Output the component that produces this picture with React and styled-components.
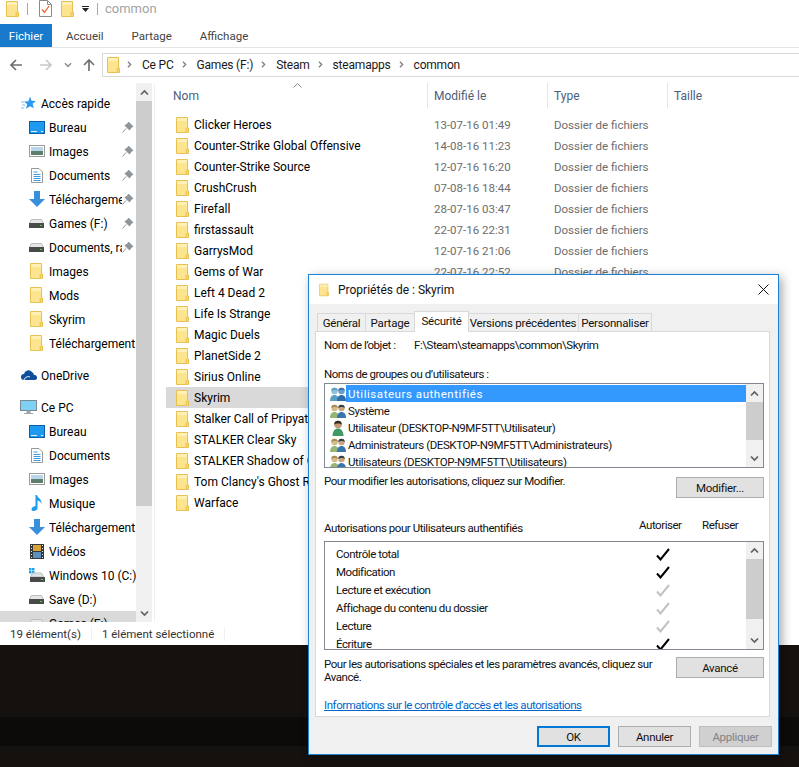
import React from 'react';
import styled, { createGlobalStyle } from 'styled-components';

const GlobalStyle = createGlobalStyle`
  html, body { margin: 0; padding: 0; background: #15110e; }
  * { box-sizing: border-box; }
  svg { display: block; flex: none; }
`;

const UI_FONT = 'Roboto, "Noto Sans", sans-serif';

const Page = styled.div`
  position: relative;
  display: flex;
  flex-direction: column;
  width: 799px;
  height: 767px;
  overflow: hidden;
  font-family: ${UI_FONT};
  background: #15110e;
`;
const Explorer = styled.div`
  display: flex;
  flex-direction: column;
  height: 645px;
  background: #fff;
`;
const QuickBar = styled.div`
  display: flex;
  align-items: center;
  height: 24px;
  padding: 0 0 7px 6px;
`;
const BarLine = styled.span`
  width: 1px;
  height: 12px;
  background: #a8a8a8;
  margin: ${p => p.$margin};
`;
const BarGap = styled.span`
  width: ${p => p.$w}px;
  flex: none;
`;
const BarTitle = styled.span`
  font-size: 13px;
  color: #a3a3a3;
  margin-left: 7px;
`;
const Ribbon = styled.div`
  display: flex;
  height: 24px;
  border-bottom: 1px solid #e6e6e6;
`;
const FileTab = styled.div`
  width: 52px;
  height: 23px;
  background: #1979ca;
  color: #fff;
  font-size: 11.5px;
  line-height: 25px;
  text-align: center;
`;
const RibbonTab = styled.div`
  font-size: 11.5px;
  line-height: 25px;
  color: #444;
  margin-left: ${p => p.$gap}px;
`;
const AddressRow = styled.div`
  display: flex;
  align-items: flex-start;
  height: 35px;
  padding: 5px 0 0 9px;
`;
const NavButton = styled.div`
  width: ${p => p.$w}px;
  height: 24px;
  display: flex;
  align-items: center;
  justify-content: flex-start;
`;
const AddressBox = styled.div`
  display: flex;
  align-items: center;
  flex: 1;
  height: 24px;
  margin-left: 5px;
  padding: 0 0 1px 4px;
  border: 1px solid #d9d9d9;
  border-right: none;
`;
const Crumb = styled.span`
  font-size: 12px;
  letter-spacing: -0.2px;
  color: #1a1a1a;
  margin: 0 7px 0 9px;
  white-space: nowrap;
`;
const Body = styled.div`
  display: flex;
  flex: 1;
  min-height: 0;
`;
const Sidebar = styled.div`
  display: flex;
  width: 155px;
  border-right: 1px solid #f0f0f0;
`;
const NavList = styled.div`
  width: 136px;
  padding-top: 8px;
  overflow: hidden;
`;
const NavRow = styled.div`
  display: flex;
  align-items: center;
  height: 24px;
  padding-left: ${p => (p.$top ? 20 : 28)}px;
  margin-top: ${p => p.$space || 0}px;
  background: ${p => (p.$active ? '#d9d9d9' : 'transparent')};
`;
const NavIcon = styled.span`
  display: flex;
  justify-content: center;
  width: 17px;
  margin-right: 4px;
`;
const NavText = styled.span`
  flex: 1;
  min-width: 0;
  padding-top: 1px;
  overflow: hidden;
  white-space: nowrap;
  font-size: 12px;
  color: #000;
`;
const PinSlot = styled.span`
  width: 14px;
  flex: none;
`;
const ScrollTrack = styled.div`
  display: flex;
  flex-direction: column;
  align-items: center;
  width: ${p => p.$w}px;
  flex: none;
  background: #f0f0f0;
`;
const ScrollArrow = styled.div`
  display: flex;
  align-items: center;
  justify-content: center;
  width: 100%;
  height: ${p => p.$h}px;
  flex: none;
`;
const ScrollThumb = styled.div`
  width: 100%;
  flex: none;
  height: ${p => p.$h}px;
  background: #cdcdcd;
`;
const ScrollGap = styled.div`
  flex: 1;
`;
const Main = styled.div`
  flex: 1;
  min-width: 0;
  overflow: hidden;
`;
const HeaderRow = styled.div`
  position: relative;
  display: flex;
  height: 25px;
  padding-left: 18px;
  margin-bottom: 6px;
`;
const SortCaret = styled.div`
  position: absolute;
  left: 138px;
  top: 0;
`;
const HeaderCell = styled.div`
  width: ${p => p.$w}px;
  flex: none;
  font-size: 12px;
  line-height: 26px;
  color: #4c607a;
  padding-left: ${p => p.$pad || 0}px;
  border-right: 1px solid ${p => (p.$last ? 'transparent' : '#e5e5e5')};
`;
const FileRow = styled.div`
  display: flex;
  align-items: center;
  height: 21px;
  margin-left: 11px;
  width: 390px;
  background: ${p => (p.$active ? '#d9d9d9' : 'transparent')};
`;
const FileIcon = styled.span`
  width: 28px;
  padding-left: 10px;
  flex: none;
`;
const FileName = styled.span`
  width: 240px;
  flex: none;
  white-space: nowrap;
  overflow: hidden;
  font-size: 12px;
  color: #000;
`;
const FileMeta = styled.span`
  width: 120px;
  flex: none;
  font-size: 11.5px;
  color: #6d6d6d;
  white-space: nowrap;
`;
const StatusBar = styled.div`
  display: flex;
  align-items: center;
  height: 23px;
  padding-left: 10px;
  font-size: 11.5px;
  color: #333;
`;
const StatusLine = styled.span`
  width: 1px;
  height: 14px;
  background: #f0f0f0;
  margin: ${p => p.$margin};
`;
const Desktop = styled.div`
  flex: 1;
  padding-top: 72px;
`;
const DesktopBand = styled.div`
  height: 29px;
  background: #0c0b09;
`;

const Dialog = styled.div`
  position: absolute;
  left: 308px;
  top: 274px;
  display: flex;
  flex-direction: column;
  width: 471px;
  height: 481px;
  background: #f0f0f0;
  border: 1px solid #1883d7;
  box-shadow: 3px 3px 10px rgba(0, 0, 0, 0.35);
  color: #111;
`;
const DialogTitle = styled.div`
  display: flex;
  align-items: center;
  height: 29px;
  padding: 0 9px 0 10px;
  background: #fff;
  font-size: 12px;
  color: #111;
`;
const TitleText = styled.span`
  flex: 1;
  margin-left: 9px;
`;
const TabStrip = styled.div`
  display: flex;
  align-items: flex-end;
  height: 28px;
  padding-left: 8px;
  margin-bottom: -1px;
  position: relative;
  z-index: 1;
`;
const Tab = styled.div`
  width: ${p => p.$w}px;
  height: ${p => (p.$active ? 21 : 19)}px;
  margin: 0 ${p => (p.$active ? -1 : 0)}px;
  position: relative;
  z-index: ${p => (p.$active ? 2 : 1)};
  background: ${p => (p.$active ? '#fff' : '#f0f0f0')};
  border: 1px solid #d9d9d9;
  border-bottom: ${p => (p.$active ? 'none' : '1px solid #d9d9d9')};
  border-left-width: ${p => (p.$first || p.$active ? 1 : 0)}px;
  font-size: 11.5px;
  letter-spacing: -0.2px;
  line-height: ${p => (p.$active ? 19 : 18)}px;
  text-align: center;
  white-space: nowrap;
`;
const Panel = styled.div`
  display: flex;
  flex-direction: column;
  height: 386px;
  margin: 0 8px 0 6px;
  padding: 4px 5px 0 8px;
  background: #fff;
  border: 1px solid #d9d9d9;
  font-size: 11.5px;
  letter-spacing: -0.45px;
`;
const ObjectRow = styled.div`
  display: flex;
  height: 18px;
  line-height: 18px;
  margin-bottom: 11px;
`;
const ObjectLabel = styled.span`
  width: 90px;
  flex: none;
`;
const Label = styled.div`
  height: 18px;
  line-height: 18px;
  margin-top: ${p => p.$top || 0}px;
`;
const ListBox = styled.div`
  display: flex;
  flex: none;
  height: ${p => p.$h}px;
  border: 1px solid #828790;
  overflow: hidden;
`;
const ListRows = styled.div`
  flex: 1;
  min-width: 0;
  padding-top: ${p => p.$pad}px;
  overflow: hidden;
`;
const UserRow = styled.div`
  display: flex;
  align-items: center;
  height: 17px;
  padding-left: 5px;
`;
const UserName = styled.span`
  flex: 1;
  height: 17px;
  line-height: 18px;
  padding-left: 2px;
  white-space: nowrap;
  letter-spacing: ${p => (p.$active ? '0.55px' : '-0.4px')};
  color: ${p => (p.$active ? '#fff' : '#111')};
  background: ${p => (p.$active ? '#3399ff' : 'transparent')};
`;
const ActionRow = styled.div`
  display: flex;
  justify-content: space-between;
  align-items: flex-start;
  margin-top: ${p => p.$top}px;
`;
const Hint = styled.div`
  width: 345px;
  line-height: 13px;
  margin-top: 1px;
`;
const Button = styled.div`
  display: flex;
  align-items: center;
  justify-content: center;
  flex: none;
  width: ${p => p.$w || 88}px;
  height: 21px;
  background: ${p => (p.$disabled ? '#d0d0d0' : '#e1e1e1')};
  border: ${p => (p.$primary ? '2px solid #0078d7' : `1px solid ${p.$disabled ? '#bfbfbf' : '#adadad'}`)};
  color: ${p => (p.$disabled ? '#838383' : '#111')};
  font-size: 11.5px;
  letter-spacing: -0.3px;
`;
const PermHeader = styled.div`
  display: grid;
  grid-template-columns: 315px 63px 60px;
  height: 20px;
  margin-top: 18px;
  margin-bottom: 5px;
`;
const PermTitle = styled.span`
  line-height: 24px;
`;
const PermColumn = styled.span`
  line-height: 18px;
`;
const PermRow = styled.div`
  display: grid;
  grid-template-columns: 320px 18px;
  align-items: center;
  height: 18px;
  padding-left: 11px;
`;
const LinkText = styled.a`
  display: block;
  margin-top: 14px;
  color: #0066cc;
  text-decoration: underline;
`;
const DialogFooter = styled.div`
  display: flex;
  justify-content: flex-end;
  gap: 8px;
  padding: 9px 6px 0 0;
`;

const Folder = ({ w = 13, h = 16 }) => (
  <svg width={w} height={h} viewBox="0 0 13 16">
    <path d="M.5.5h11v10.500h1v4.500H.5z" fill="#fde48f" stroke="#e8c050" />
    <path d="M1 1h10v3H1z" fill="#fff0b8" />
    <path d="M9.500 11h2v4.500h-2z" fill="#f1ca5a" />
  </svg>
);
const Chevron = ({ dir = 'down', color = '#606060', size = 9 }) => {
  const rot = { down: 0, up: 180, right: -90 }[dir];
  return (
    <svg width={size} height={size} viewBox="0 0 9 9" style={{ transform: `rotate(${rot}deg)` }}>
      <path d="M1 2.500l3.500 3.500L8 2.500" fill="none" stroke={color} strokeWidth="1.700" />
    </svg>
  );
};
const Arrow = ({ dir, color }) => {
  const rot = { left: 0, right: 180, up: 90 }[dir];
  return (
    <svg width="14" height="14" viewBox="0 0 14 14" style={{ transform: `rotate(${rot}deg)` }}>
      <path d="M13 7H2M7 2L2 7l5 5" fill="none" stroke={color} strokeWidth="1.700" />
    </svg>
  );
};
const CheckList = () => (
  <svg width="13" height="17" viewBox="0 0 13 17">
    <path d="M.5.5h8l4 4v12H.5z" fill="#fff" stroke="#8a8a8a" />
    <path d="M8.500.5v4h4" fill="none" stroke="#8a8a8a" />
    <path d="M3 9.500l2.500 3L10 6" fill="none" stroke="#e8622a" strokeWidth="1.300" />
  </svg>
);
const Star = () => (
  <svg width="15" height="15" viewBox="0 0 15 15">
    <path d="M9 .5l1.600 4.300 4.400.2-3.400 2.800 1.200 4.400L9 10.200l-4 2.500 1.200-4.400L3 5.600l4.400-.3z" fill="#2a9af0" />
    <path d="M0 6h3M1 9h3M0 12h3" stroke="#7cc3f5" strokeWidth="1" />
  </svg>
);
const DesktopIcon = () => (
  <svg width="16" height="13" viewBox="0 0 16 13">
    <rect x=".5" y=".5" width="15" height="12" fill="#1e9bf0" stroke="#0d5fa8" />
    <path d="M2 10.500h6M12 10.500h2" stroke="#dff1ff" strokeWidth="1" />
  </svg>
);
const PicturesIcon = () => (
  <svg width="16" height="12" viewBox="0 0 16 12">
    <rect x=".5" y=".5" width="15" height="11" fill="#fff" stroke="#9a9a9a" />
    <rect x="2" y="2" width="12" height="4" fill="#b8d6e8" />
    <rect x="2" y="6" width="12" height="4" fill="#5d7f6a" />
  </svg>
);
const DocIcon = () => (
  <svg width="12" height="15" viewBox="0 0 12 15">
    <path d="M.5.5h7.500l3.500 3.500v10.500H.5z" fill="#fff" stroke="#9a9a9a" />
    <path d="M2.500 4h4M2.500 6.500h7M2.500 8.500h7M2.500 10.500h7M2.500 12.500h7" stroke="#3f9ae0" strokeWidth="1" />
  </svg>
);
const DownloadIcon = () => (
  <svg width="16" height="16" viewBox="0 0 16 16">
    <path d="M5 0h6v8h5l-8 8-8-8h5z" fill="#3a8fdc" />
  </svg>
);
const DriveIcon = () => (
  <svg width="15" height="9" viewBox="0 0 15 9">
    <path d="M2.500.5h10l2 4h-14z" fill="#e6e6e6" stroke="#bdbdbd" />
    <rect x="0" y="4" width="15" height="5" fill="#4a4a4a" />
    <rect x="11" y="6" width="2" height="1" fill="#3fe04a" />
  </svg>
);
const WinDriveIcon = () => (
  <svg width="16" height="14" viewBox="0 0 16 14">
    <path d="M0 0h2.500v2.500H0zM3 0h2.500v2.500H3zM0 3h2.500v2.500H0zM3 3h2.500v2.500H3z" fill="#1fa3ea" />
    <path d="M3.500 5h9l2 4h-13z" fill="#dfe6ea" stroke="#bdbdbd" />
    <rect x="1" y="9" width="15" height="5" fill="#4a4a4a" />
    <rect x="12" y="11" width="2" height="1" fill="#3fe04a" />
  </svg>
);
const PinIcon = () => (
  <svg width="11" height="11" viewBox="0 0 11 11">
    <path d="M6.500 0L11 4.500 9.500 5 7.500 8 3 3.500 6 1.500zM4 6.500L.5 10.500" fill="#8d949b" stroke="#8d949b" />
  </svg>
);
const CloudIcon = () => (
  <svg width="16" height="10" viewBox="0 0 16 10">
    <path d="M3 10a3 3 0 010-6 4.500 4.500 0 018-2 3.500 3.500 0 012 3 2.500 2.500 0 011 5z" fill="#0f4f9e" />
    <path d="M3 10c1-3 4-4 6-3" fill="none" stroke="#fff" strokeWidth="1" />
  </svg>
);
const MonitorIcon = () => (
  <svg width="17" height="15" viewBox="0 0 17 15">
    <rect x=".5" y=".5" width="16" height="10" fill="#7fd0f5" stroke="#7a8a94" />
    <path d="M7 11h3v2H7zM4 13.500h9" fill="#9aa5ad" stroke="#9aa5ad" />
  </svg>
);
const NoteIcon = () => (
  <svg width="12" height="16" viewBox="0 0 12 16">
    <path d="M4.500 0h1.500c.5 3 5 4 4.500 9-.5-2-2-3-4-3.500V13c0 2-2 3-4 3S0 14.500 1 13s2-2 3.500-1.800z" fill="#1e9bf0" />
  </svg>
);
const FilmIcon = () => (
  <svg width="14" height="15" viewBox="0 0 14 15">
    <rect width="14" height="15" fill="#34373a" />
    <rect x="3" y="1" width="8" height="6" fill="#d9a23a" />
    <rect x="3" y="8" width="8" height="6" fill="#5a8fc0" />
    <path d="M1 1.500h1M1 4.500h1M1 7.500h1M1 10.500h1M1 13.500h1M12 1.500h1M12 4.500h1M12 7.500h1M12 10.500h1M12 13.500h1" stroke="#e8e8e8" />
  </svg>
);
const Person = ({ x = 0, skin, hair, shirt }) => (
  <g transform={`translate(${x} 0)`}>
    <circle cx="4.500" cy="4" r="3.200" fill={skin} />
    <path d="M1.300 4a3.200 3.200 0 016.400 0C6.500 2.500 3 2.500 1.300 4z" fill={hair} />
    <path d="M0 14c0-4 2-6 4.500-6S9 10 9 14z" fill={shirt} />
  </g>
);
const GroupIcon = ({ muted }) => (
  <svg width="16" height="14" viewBox="0 0 16 14">
    {muted ? (
      <>
        <Person skin="#8fc0d8" hair="#5b9fc0" shirt="#5b9fc0" />
        <Person x={7} skin="#6a9cc8" hair="#3d73ad" shirt="#2f6cab" />
      </>
    ) : (
      <>
        <Person skin="#d6bb8a" hair="#a88c54" shirt="#96b774" />
        <Person x={7} skin="#c9a57c" hair="#34404e" shirt="#3a74ad" />
      </>
    )}
  </svg>
);
const UserIcon = () => (
  <svg width="16" height="16" viewBox="0 0 16 16">
    <circle cx="8" cy="4.500" r="3.800" fill="#c39a75" />
    <path d="M4.200 4.500a3.800 3.800 0 017.600 0C10 3 6 3 4.200 4.500z" fill="#2f2a24" />
    <path d="M2.500 16c0-5 2.500-7.500 5.500-7.500s5.500 2.500 5.500 7.500z" fill="#3e9a62" />
  </svg>
);
const Tick = ({ off }) => (
  <svg width="14" height="13" viewBox="0 0 14 13">
    <path d="M1 7.500l3.500 4L13 1" fill="none" stroke={off ? '#c2c2c2' : '#000'} strokeWidth="2" />
  </svg>
);
const CloseIcon = () => (
  <svg width="11" height="11" viewBox="0 0 11 11">
    <path d="M.5.5l10 10M10.500.5l-10 10" stroke="#111" strokeWidth="1" />
  </svg>
);

const NAV_ITEMS = [
  { label: 'Accès rapide', Icon: Star, top: true },
  { label: 'Bureau', Icon: DesktopIcon, pin: true },
  { label: 'Images', Icon: PicturesIcon, pin: true },
  { label: 'Documents', Icon: DocIcon, pin: true },
  { label: 'Téléchargements', Icon: DownloadIcon, pin: true },
  { label: 'Games (F:)', Icon: DriveIcon, pin: true },
  { label: 'Documents, rapports', Icon: DriveIcon, pin: true },
  { label: 'Images', Icon: Folder },
  { label: 'Mods', Icon: Folder },
  { label: 'Skyrim', Icon: Folder },
  { label: 'Téléchargement', Icon: Folder },
  { label: 'OneDrive', Icon: CloudIcon, top: true, space: 8 },
  { label: 'Ce PC', Icon: MonitorIcon, top: true, space: 8 },
  { label: 'Bureau', Icon: DesktopIcon },
  { label: 'Documents', Icon: DocIcon },
  { label: 'Images', Icon: PicturesIcon },
  { label: 'Musique', Icon: NoteIcon },
  { label: 'Téléchargement', Icon: DownloadIcon },
  { label: 'Vidéos', Icon: FilmIcon },
  { label: 'Windows 10 (C:)', Icon: WinDriveIcon },
  { label: 'Save (D:)', Icon: DriveIcon },
  { label: 'Games (F:)', Icon: DriveIcon, active: true },
];

const FILES = [
  ['Clicker Heroes', '13-07-16 01:49'],
  ['Counter-Strike Global Offensive', '14-08-16 11:23'],
  ['Counter-Strike Source', '12-07-16 16:20'],
  ['CrushCrush', '07-08-16 18:44'],
  ['Firefall', '28-07-16 03:47'],
  ['firstassault', '22-07-16 22:31'],
  ['GarrysMod', '12-07-16 21:06'],
  ['Gems of War', '22-07-16 22:52'],
  ['Left 4 Dead 2'],
  ['Life Is Strange'],
  ['Magic Duels'],
  ['PlanetSide 2'],
  ['Sirius Online'],
  ['Skyrim'],
  ['Stalker Call of Pripyat'],
  ['STALKER Clear Sky'],
  ['STALKER Shadow of Chernobyl'],
  ["Tom Clancy's Ghost Recon"],
  ['Warface'],
];

const USERS = [
  { label: 'Utilisateurs authentifiés', icon: <GroupIcon muted />, active: true },
  { label: 'Système', icon: <GroupIcon /> },
  { label: 'Utilisateur (DESKTOP-N9MF5TT\\Utilisateur)', icon: <UserIcon /> },
  { label: 'Administrateurs (DESKTOP-N9MF5TT\\Administrateurs)', icon: <GroupIcon /> },
  { label: 'Utilisateurs (DESKTOP-N9MF5TT\\Utilisateurs)', icon: <GroupIcon /> },
];

const PERMISSIONS = [
  ['Contrôle total', false],
  ['Modification', false],
  ['Lecture et exécution', true],
  ['Affichage du contenu du dossier', true],
  ['Lecture', true],
  ['Écriture', false],
];

const TABS = [
  ['Général', 49],
  ['Partage', 49],
  ['Sécurité', 55, true],
  ['Versions précédentes', 111],
  ['Personnaliser', 73],
];

const CRUMBS = ['Ce PC', 'Games (F:)', 'Steam', 'steamapps', 'common'];

const Scrollbar = ({ w, thumb, arrowH = 18 }) => (
  <ScrollTrack $w={w}>
    <ScrollArrow $h={arrowH}><Chevron dir="up" /></ScrollArrow>
    <ScrollThumb $h={thumb} />
    <ScrollGap />
    <ScrollArrow $h={arrowH}><Chevron /></ScrollArrow>
  </ScrollTrack>
);

const App = () => (
  <Page>
    <GlobalStyle />
    <Explorer>
      <QuickBar>
        <Folder />
        <BarLine $margin="0 11px 0 8px" />
        <CheckList />
        <BarGap $w={9} />
        <Folder />
        <BarGap $w={8} />
        <svg width="7" height="6" viewBox="0 0 7 6">
          <path d="M0 0h7v1H0zM0 2h7L3.500 6z" fill="#222" />
        </svg>
        <BarGap $w={8} />
        <BarLine $margin="0" />
        <BarTitle>common</BarTitle>
      </QuickBar>
      <Ribbon>
        <FileTab>Fichier</FileTab>
        <RibbonTab $gap={14}>Accueil</RibbonTab>
        <RibbonTab $gap={28}>Partage</RibbonTab>
        <RibbonTab $gap={28}>Affichage</RibbonTab>
      </Ribbon>
      <AddressRow>
        <NavButton $w={30}><Arrow dir="left" color="#707070" /></NavButton>
        <NavButton $w={25}><Arrow dir="right" color="#c8c8c8" /></NavButton>
        <NavButton $w={18}><Chevron color="#909090" size={8} /></NavButton>
        <NavButton $w={15}><Arrow dir="up" color="#707070" /></NavButton>
        <AddressBox>
          <Folder />
          <BarGap $w={6} />
          {CRUMBS.map(crumb => (
            <React.Fragment key={crumb}>
              <Chevron dir="right" color="#808080" size={7} />
              <Crumb>{crumb}</Crumb>
            </React.Fragment>
          ))}
        </AddressBox>
      </AddressRow>
      <Body>
        <Sidebar>
          <NavList>
            {NAV_ITEMS.map(({ label, Icon, top, pin, space, active }, i) => (
              <NavRow key={i} $top={top} $space={space} $active={active}>
                <NavIcon><Icon /></NavIcon>
                <NavText>{label}</NavText>
                {pin && <PinSlot><PinIcon /></PinSlot>}
              </NavRow>
            ))}
          </NavList>
          <Scrollbar w={16} thumb={405} />
        </Sidebar>
        <Main>
          <HeaderRow>
            <SortCaret>
              <svg width="9" height="5" viewBox="0 0 9 5"><path d="M.5 4.500l4-4 4 4" fill="none" stroke="#888" /></svg>
            </SortCaret>
            <HeaderCell $w={255}>Nom</HeaderCell>
            <HeaderCell $w={120} $pad={6}>Modifié le</HeaderCell>
            <HeaderCell $w={120} $pad={6}>Type</HeaderCell>
            <HeaderCell $w={120} $pad={6} $last>Taille</HeaderCell>
          </HeaderRow>
          {FILES.map(([name, date]) => (
            <FileRow key={name} $active={name === 'Skyrim'}>
              <FileIcon><Folder /></FileIcon>
              <FileName>{name}</FileName>
              {date && <FileMeta>{date}</FileMeta>}
              {date && <FileMeta>Dossier de fichiers</FileMeta>}
            </FileRow>
          ))}
        </Main>
      </Body>
      <StatusBar>
        19 élément(s)
        <StatusLine $margin="0 10px 0 10px" />
        1 élément sélectionné
        <StatusLine $margin="0 0 0 10px" />
      </StatusBar>
    </Explorer>
    <Desktop><DesktopBand /></Desktop>

    <Dialog>
      <DialogTitle>
        <Folder w={10} h={14} />
        <TitleText>Propriétés de : Skyrim</TitleText>
        <CloseIcon />
      </DialogTitle>
      <TabStrip>
        {TABS.map(([label, w, active], i) => (
          <Tab key={label} $w={w} $active={active} $first={i === 0}>{label}</Tab>
        ))}
      </TabStrip>
      <Panel>
        <ObjectRow>
          <ObjectLabel>Nom de l’objet :</ObjectLabel>
          F:\Steam\steamapps\common\Skyrim
        </ObjectRow>
        <Label>Noms de groupes ou d’utilisateurs :</Label>
        <ListBox $h={85}>
          <ListRows $pad={1}>
            {USERS.map(u => (
              <UserRow key={u.label}>
                {u.icon}
                <UserName $active={u.active}>{u.label}</UserName>
              </UserRow>
            ))}
          </ListRows>
          <Scrollbar w={17} thumb={38} />
        </ListBox>
        <ActionRow $top={9}>
          <Label $top={-5}>Pour modifier les autorisations, cliquez sur Modifier.</Label>
          <Button>Modifier...</Button>
        </ActionRow>
        <PermHeader>
          <PermTitle>Autorisations pour Utilisateurs authentifiés</PermTitle>
          <PermColumn>Autoriser</PermColumn>
          <PermColumn>Refuser</PermColumn>
        </PermHeader>
        <ListBox $h={109}>
          <ListRows $pad={3}>
            {PERMISSIONS.map(([label, off]) => (
              <PermRow key={label}>
                <span>{label}</span>
                <Tick off={off} />
              </PermRow>
            ))}
          </ListRows>
          <Scrollbar w={17} thumb={60} arrowH={17} />
        </ListBox>
        <ActionRow $top={7}>
          <Hint>Pour les autorisations spéciales et les paramètres avancés, cliquez sur Avancé.</Hint>
          <Button>Avancé</Button>
        </ActionRow>
        <LinkText>Informations sur le contrôle d’accès et les autorisations</LinkText>
      </Panel>
      <DialogFooter>
        <Button $w={73} $primary>OK</Button>
        <Button $w={73}>Annuler</Button>
        <Button $w={73} $disabled>Appliquer</Button>
      </DialogFooter>
    </Dialog>
  </Page>
);

export default App;
